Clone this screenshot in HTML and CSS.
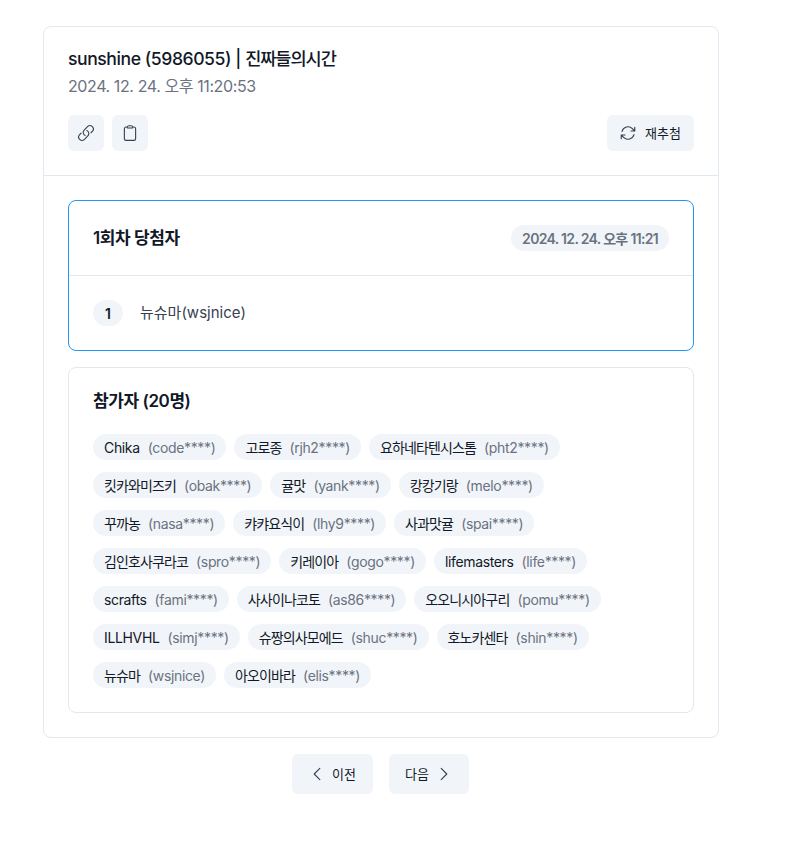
FILE: index.html
```html
<!DOCTYPE html>
<html lang="ko">
<head>
<meta charset="utf-8">
<title>추첨 결과</title>
<link rel="stylesheet" href="styles.css">
</head>
<body>
<main class="page">
  <section class="card">
    <header class="head">
      <h1 class="title">sunshine (5986055) | <span class="ko">진짜들의시간</span></h1>
      <p class="date">2024. 12. 24. 오후 11:20:53</p>
      <div class="actions">
        <div class="action-group">
          <button class="btn icon-btn" aria-label="링크">
            <svg class="ico" viewBox="0 0 24 24"><path d="M13.19 8.688a4.5 4.5 0 0 1 1.242 7.244l-4.5 4.5a4.5 4.5 0 0 1-6.364-6.364l1.757-1.757m13.35-.622 1.757-1.757a4.5 4.5 0 0 0-6.364-6.364l-4.5 4.5a4.5 4.5 0 0 0 1.242 7.244"/></svg>
          </button>
          <button class="btn icon-btn" aria-label="복사">
            <svg class="ico" viewBox="0 0 24 24"><path d="M15.666 3.888A2.25 2.25 0 0 0 13.5 2.25h-3c-1.03 0-1.9.693-2.166 1.638m7.332 0c.055.194.084.4.084.612v0a.75.75 0 0 1-.75.75H9a.75.75 0 0 1-.75-.75v0c0-.212.03-.418.084-.612m7.332 0c.646.049 1.288.11 1.927.184 1.1.128 1.907 1.077 1.907 2.185V19.5a2.25 2.25 0 0 1-2.25 2.25H6.75A2.25 2.25 0 0 1 4.5 19.5V6.257c0-1.108.806-2.057 1.907-2.185a48.208 48.208 0 0 1 1.927-.184"/></svg>
          </button>
        </div>
        <button class="btn text-btn redraw">
          <svg class="ico" viewBox="0 0 24 24"><path d="M16.023 9.348h4.992v-.001M2.985 19.644v-4.992m0 0h4.992m-4.993 0 3.181 3.183a8.25 8.25 0 0 0 13.803-3.7M4.031 9.865a8.25 8.25 0 0 1 13.803-3.7l3.181 3.182m0-4.991v4.99"/></svg>
          <span>재추첨</span>
        </button>
      </div>
    </header>
    <div class="body">
      <section class="winner">
        <div class="winner-head">
          <h2 class="sub">1회차 당첨자</h2>
          <span class="stamp">2024. 12. 24. 오후 11:21</span>
        </div>
        <div class="winner-row">
          <span class="rank">1</span>
          <span class="winner-name">뉴슈마(wsjnice)</span>
        </div>
      </section>
      <section class="people">
        <h2 class="sub">참가자 (20명)</h2>
        <ul class="chips">
          <li class="chip"><span class="nick">Chika</span><span class="uid">(code****)</span></li>
          <li class="chip"><span class="nick ko">고로종</span><span class="uid">(rjh2****)</span></li>
          <li class="chip"><span class="nick ko">요하네타텐시스톰</span><span class="uid">(pht2****)</span></li>
          <li class="chip"><span class="nick ko">킷카와미즈키</span><span class="uid">(obak****)</span></li>
          <li class="chip"><span class="nick ko">귤맛</span><span class="uid">(yank****)</span></li>
          <li class="chip"><span class="nick ko">캉캉기랑</span><span class="uid">(melo****)</span></li>
          <li class="chip"><span class="nick ko">꾸까농</span><span class="uid">(nasa****)</span></li>
          <li class="chip"><span class="nick ko">캬캬요식이</span><span class="uid">(lhy9****)</span></li>
          <li class="chip"><span class="nick ko">사과맛귤</span><span class="uid">(spai****)</span></li>
          <li class="chip"><span class="nick ko">김인호사쿠라코</span><span class="uid">(spro****)</span></li>
          <li class="chip"><span class="nick ko">키레이아</span><span class="uid">(gogo****)</span></li>
          <li class="chip"><span class="nick">lifemasters</span><span class="uid">(life****)</span></li>
          <li class="chip"><span class="nick">scrafts</span><span class="uid">(fami****)</span></li>
          <li class="chip"><span class="nick ko">사사이나코토</span><span class="uid">(as86****)</span></li>
          <li class="chip"><span class="nick ko">오오니시아구리</span><span class="uid">(pomu****)</span></li>
          <li class="chip"><span class="nick">ILLHVHL</span><span class="uid">(simj****)</span></li>
          <li class="chip"><span class="nick ko">슈짱의사모에드</span><span class="uid">(shuc****)</span></li>
          <li class="chip"><span class="nick ko">호노카센타</span><span class="uid">(shin****)</span></li>
          <li class="chip"><span class="nick ko">뉴슈마</span><span class="uid">(wsjnice)</span></li>
          <li class="chip"><span class="nick ko">아오이바라</span><span class="uid">(elis****)</span></li>
        </ul>
      </section>
    </div>
  </section>
  <nav class="pager">
    <button class="btn text-btn page-btn prev">
      <svg class="ico" viewBox="0 0 24 24"><path d="M15.75 19.5 8.25 12l7.5-7.5"/></svg>
      <span>이전</span>
    </button>
    <button class="btn text-btn page-btn">
      <span>다음</span>
      <svg class="ico" viewBox="0 0 24 24"><path d="m8.25 4.5 7.5 7.5-7.5 7.5"/></svg>
    </button>
  </nav>
</main>
</body>
</html>
```
FILE: styles.css
```css
* { box-sizing: border-box; }
html, body { margin: 0; padding: 0; background: #fff; }
body {
  font-family: Inter, "Noto Sans CJK KR", sans-serif;
  color: #111827;
  font-size: 14px;
}
h1, h2, p, ul { margin: 0; padding: 0; }
ul { list-style: none; }
.page {
  width: 676px;
  margin-left: 43px;
  padding-top: 26px;
}
.card {
  border: 1px solid #e2e8f0;
  border-radius: 8px;
  background: #fff;
}
.head {
  padding: 20px 24px 24px;
  border-bottom: 1px solid #e2e8f0;
}
.title {
  font-size: 17.6px;
  line-height: 24px;
  font-weight: 500;
  letter-spacing: -0.025em;
  color: #111827;
}
.date {
  margin-top: 3px;
  font-size: 16px;
  line-height: 24px;
  letter-spacing: -0.025em;
  color: #6b7280;
}
.actions {
  margin-top: 17px;
  display: flex;
  justify-content: space-between;
}
.action-group { display: flex; gap: 8px; }
.btn {
  border: 0;
  background: #f1f5f9;
  border-radius: 6px;
  font-family: inherit;
  color: #111827;
  display: inline-flex;
  align-items: center;
  justify-content: center;
  padding: 0;
}
.ico {
  width: 18px;
  height: 18px;
  fill: none;
  stroke: #374151;
  stroke-width: 1.5;
  stroke-linecap: round;
  stroke-linejoin: round;
  flex: none;
}
.icon-btn { width: 36px; height: 36px; }
.text-btn { font-size: 13px; line-height: 16px; }
.redraw { height: 36px; padding: 0 13px 0 12px; gap: 8px; }
.body {
  padding: 24px;
  display: flex;
  flex-direction: column;
  gap: 16px;
}
.winner {
  border: 1px solid #2196f3;
  border-radius: 8px;
}
.winner-head {
  height: 75px;
  padding: 0 24px;
  display: flex;
  align-items: center;
  justify-content: space-between;
  border-bottom: 1px solid #e2e8f0;
}
.sub {
  font-size: 17px;
  line-height: 24px;
  font-weight: 600;
  letter-spacing: -0.025em;
  color: #111827;
}
.stamp {
  background: #f1f5f9;
  border-radius: 999px;
  padding: 0 11px;
  height: 26px;
  display: inline-flex;
  align-items: center;
  font-size: 14px;
  font-weight: 600;
  letter-spacing: -0.048em;
  color: #6b7280;
}
.winner-row {
  height: 74px;
  padding: 0 24px;
  display: flex;
  align-items: center;
  gap: 17px;
}
.rank {
  width: 30px;
  height: 26px;
  border-radius: 999px;
  background: #f1f5f9;
  display: flex;
  align-items: center;
  justify-content: center;
  font-size: 14px;
  font-weight: 600;
}
.winner-name { font-size: 15px; color: #374151; margin-bottom: 3px; }
.people {
  border: 1px solid #e2e8f0;
  border-radius: 8px;
  padding: 21px 24px 24px;
}
.chips {
  margin-top: 21px;
  display: flex;
  flex-wrap: wrap;
  gap: 12px 8px;
}
.chip {
  height: 26px;
  padding: 0 11px;
  border-radius: 999px;
  background: #f1f5f9;
  display: flex;
  align-items: center;
  gap: 8px;
  font-size: 14px;
  letter-spacing: -0.025em;
}
.nick { color: #111827; }
.uid { color: #6b7280; }
.ko { letter-spacing: -0.062em; }
.pager {
  margin-top: 16px;
  padding-right: 1px;
  display: flex;
  justify-content: center;
  gap: 16px;
}
.page-btn { height: 40px; padding: 0 16px; gap: 6px; }
.prev { padding-right: 17px; }
```
